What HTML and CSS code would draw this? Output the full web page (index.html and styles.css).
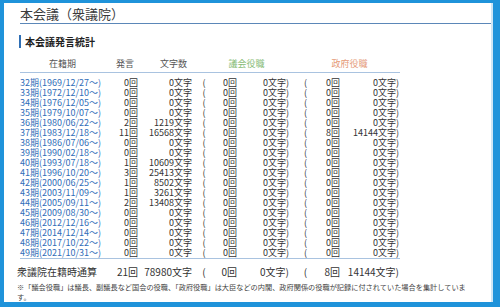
FILE: index.html
```html
<!DOCTYPE html>
<html lang="ja">
<head>
<meta charset="utf-8">
<title>本会議（衆議院）</title>
<link rel="stylesheet" href="styles.css">
</head>
<body>
<div class="frame">
  <div class="page">
    <h1 class="title">本会議（衆議院）</h1>
    <h2 class="section">本会議発言統計</h2>
    <div class="stats">
      <div class="row head">
        <span class="h-period">在籍期</span>
        <span class="h-num">発言</span>
        <span class="h-chars">文字数</span>
        <span class="h-diet">議会役職</span>
        <span class="h-gov">政府役職</span>
      </div>
      <div class="rows">
        <div class="row"><a class="period" href="#">32期(1969/12/27〜)</a><span class="r">0回</span><span class="r">0文字</span><span class="c">(</span><span class="r">0回</span><span class="r">0文字)</span><span class="c">(</span><span class="r">0回</span><span class="r">0文字)</span></div>
        <div class="row"><a class="period" href="#">33期(1972/12/10〜)</a><span class="r">0回</span><span class="r">0文字</span><span class="c">(</span><span class="r">0回</span><span class="r">0文字)</span><span class="c">(</span><span class="r">0回</span><span class="r">0文字)</span></div>
        <div class="row"><a class="period" href="#">34期(1976/12/05〜)</a><span class="r">0回</span><span class="r">0文字</span><span class="c">(</span><span class="r">0回</span><span class="r">0文字)</span><span class="c">(</span><span class="r">0回</span><span class="r">0文字)</span></div>
        <div class="row"><a class="period" href="#">35期(1979/10/07〜)</a><span class="r">0回</span><span class="r">0文字</span><span class="c">(</span><span class="r">0回</span><span class="r">0文字)</span><span class="c">(</span><span class="r">0回</span><span class="r">0文字)</span></div>
        <div class="row"><a class="period" href="#">36期(1980/06/22〜)</a><span class="r">2回</span><span class="r">1219文字</span><span class="c">(</span><span class="r">0回</span><span class="r">0文字)</span><span class="c">(</span><span class="r">0回</span><span class="r">0文字)</span></div>
        <div class="row"><a class="period" href="#">37期(1983/12/18〜)</a><span class="r">11回</span><span class="r">16568文字</span><span class="c">(</span><span class="r">0回</span><span class="r">0文字)</span><span class="c">(</span><span class="r">8回</span><span class="r">14144文字)</span></div>
        <div class="row"><a class="period" href="#">38期(1986/07/06〜)</a><span class="r">0回</span><span class="r">0文字</span><span class="c">(</span><span class="r">0回</span><span class="r">0文字)</span><span class="c">(</span><span class="r">0回</span><span class="r">0文字)</span></div>
        <div class="row"><a class="period" href="#">39期(1990/02/18〜)</a><span class="r">0回</span><span class="r">0文字</span><span class="c">(</span><span class="r">0回</span><span class="r">0文字)</span><span class="c">(</span><span class="r">0回</span><span class="r">0文字)</span></div>
        <div class="row"><a class="period" href="#">40期(1993/07/18〜)</a><span class="r">1回</span><span class="r">10609文字</span><span class="c">(</span><span class="r">0回</span><span class="r">0文字)</span><span class="c">(</span><span class="r">0回</span><span class="r">0文字)</span></div>
        <div class="row"><a class="period" href="#">41期(1996/10/20〜)</a><span class="r">3回</span><span class="r">25413文字</span><span class="c">(</span><span class="r">0回</span><span class="r">0文字)</span><span class="c">(</span><span class="r">0回</span><span class="r">0文字)</span></div>
        <div class="row"><a class="period" href="#">42期(2000/06/25〜)</a><span class="r">1回</span><span class="r">8502文字</span><span class="c">(</span><span class="r">0回</span><span class="r">0文字)</span><span class="c">(</span><span class="r">0回</span><span class="r">0文字)</span></div>
        <div class="row"><a class="period" href="#">43期(2003/11/09〜)</a><span class="r">1回</span><span class="r">3261文字</span><span class="c">(</span><span class="r">0回</span><span class="r">0文字)</span><span class="c">(</span><span class="r">0回</span><span class="r">0文字)</span></div>
        <div class="row"><a class="period" href="#">44期(2005/09/11〜)</a><span class="r">2回</span><span class="r">13408文字</span><span class="c">(</span><span class="r">0回</span><span class="r">0文字)</span><span class="c">(</span><span class="r">0回</span><span class="r">0文字)</span></div>
        <div class="row"><a class="period" href="#">45期(2009/08/30〜)</a><span class="r">0回</span><span class="r">0文字</span><span class="c">(</span><span class="r">0回</span><span class="r">0文字)</span><span class="c">(</span><span class="r">0回</span><span class="r">0文字)</span></div>
        <div class="row"><a class="period" href="#">46期(2012/12/16〜)</a><span class="r">0回</span><span class="r">0文字</span><span class="c">(</span><span class="r">0回</span><span class="r">0文字)</span><span class="c">(</span><span class="r">0回</span><span class="r">0文字)</span></div>
        <div class="row"><a class="period" href="#">47期(2014/12/14〜)</a><span class="r">0回</span><span class="r">0文字</span><span class="c">(</span><span class="r">0回</span><span class="r">0文字)</span><span class="c">(</span><span class="r">0回</span><span class="r">0文字)</span></div>
        <div class="row"><a class="period" href="#">48期(2017/10/22〜)</a><span class="r">0回</span><span class="r">0文字</span><span class="c">(</span><span class="r">0回</span><span class="r">0文字)</span><span class="c">(</span><span class="r">0回</span><span class="r">0文字)</span></div>
        <div class="row"><a class="period" href="#">49期(2021/10/31〜)</a><span class="r">0回</span><span class="r">0文字</span><span class="c">(</span><span class="r">0回</span><span class="r">0文字)</span><span class="c">(</span><span class="r">0回</span><span class="r">0文字)</span></div>
      </div>
      <div class="row total"><span class="total-label">衆議院在籍時通算</span><span class="r">21回</span><span class="r">78980文字</span><span class="c">(</span><span class="r">0回</span><span class="r">0文字)</span><span class="c">(</span><span class="r">8回</span><span class="r">14144文字)</span></div>
    </div>
    <p class="note">※「議会役職」は議長、副議長など国会の役職、「政府役職」は大臣などの内閣、政府関係の役職が記録に付されていた場合を集計しています。</p>
  </div>
</div>
</body>
</html>
```

FILE: styles.css
```css
html, body {
  margin: 0;
  padding: 0;
}
body {
  background: #1f93da;
  font-family: "Noto Sans CJK JP", "Noto Sans", sans-serif;
  color: #333;
}
.frame {
  padding: 3px 7px 5px 4px;
  height: 307px;
  box-sizing: border-box;
}
.page {
  background: #fff;
  height: 299px;
  box-sizing: border-box;
  padding: 2px 0 0 16px;
  border-right: 2px solid #cfe6f5;
  overflow: hidden;
}
.title {
  margin: 0;
  font-size: 13px;
  font-weight: 400;
  line-height: 18px;
  height: 18px;
  color: #3a3a3a;
  border-bottom: 1.5px solid #5b87b8;
}
.section {
  margin: 11px 0 0 -1px;
  font-size: 10px;
  font-weight: 700;
  line-height: 13px;
  height: 13px;
  border-left: 2px solid #2f6fb5;
  padding-left: 4px;
  color: #222;
}
.stats {
  width: 380px;
  margin-top: 8px;
}
.row {
  display: grid;
  grid-template-columns: 85px 33px 54px 24px 21px 52px 33px 18px 60px;
  font-size: 9px;
  line-height: 10px;
  height: 10px;
  white-space: nowrap;
}
.row .r {
  text-align: right;
}
.row .c {
  text-align: center;
}
.row > span:last-child {
  padding-right: 1px;
}
.period {
  color: #2f6db8;
  text-decoration: none;
}
.head {
  height: 16px;
  line-height: 16px;
  border-bottom: 1px solid #a9c3e0;
  margin-bottom: 5px;
  color: #555;
}
.h-period {
  text-align: center;
}
.h-num {
  text-align: right;
  padding-right: 4px;
}
.h-chars {
  text-align: right;
  padding-right: 5px;
}
.h-diet {
  grid-column: 4 / 7;
  text-align: center;
  padding-left: 12px;
  color: #86bb74;
}
.h-gov {
  grid-column: 7 / 10;
  text-align: center;
  padding-left: 11px;
  color: #e59a77;
}
.total {
  border-top: 1px solid #a9c3e0;
  padding-top: 6px;
  height: 14px;
  line-height: 14px;
  font-size: 10px;
}
.total-label {
  margin-left: -3px;
}
.note {
  margin: 3px 0 0 -3px;
  width: 455px;
  font-size: 7.2px;
  line-height: 10px;
  color: #444;
}
```
